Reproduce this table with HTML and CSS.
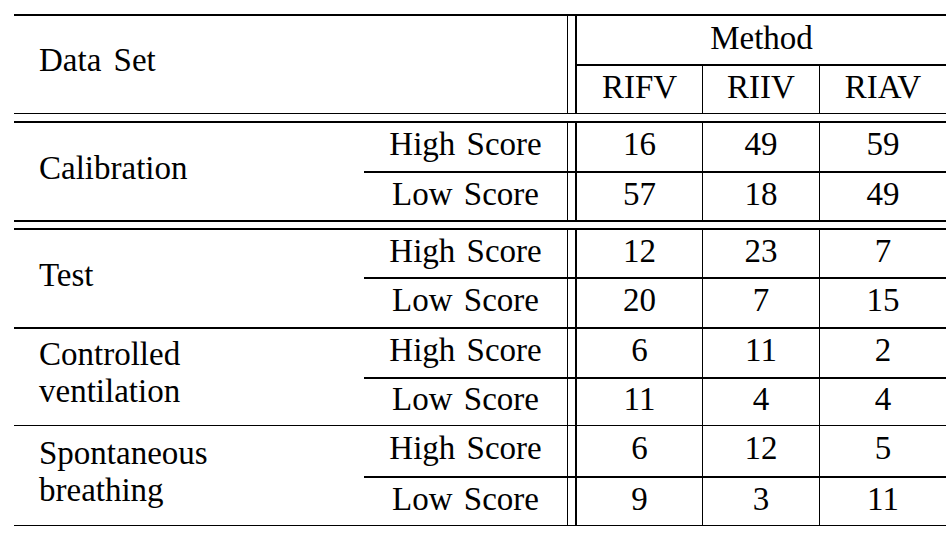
FILE: index.html
```html
<!DOCTYPE html>
<html lang="en">
<head>
<meta charset="utf-8">
<title>Data Set / Method table</title>
<link rel="stylesheet" href="styles.css">
</head>
<body>
<div class="table">
  <div class="cell head-label b1">Data Set</div>
  <div class="vrule head-vrule b1"></div>
  <div class="cell method b2">Method</div>
  <div class="cell num b1">RIFV</div>
  <div class="cell num sep b1">RIIV</div>
  <div class="cell num sep b1">RIAV</div>

  <div class="double"></div>

  <div class="cell label b2">Calibration</div>
  <div class="cell score b2">High Score</div>
  <div class="vrule b2"></div>
  <div class="cell num b2">16</div>
  <div class="cell num sep b2">49</div>
  <div class="cell num sep b2">59</div>
  <div class="cell score b2">Low Score</div>
  <div class="vrule b2"></div>
  <div class="cell num b2">57</div>
  <div class="cell num sep b2">18</div>
  <div class="cell num sep b2">49</div>

  <div class="double"></div>

  <div class="cell label b2">Test</div>
  <div class="cell score b2">High Score</div>
  <div class="vrule b2"></div>
  <div class="cell num b2">12</div>
  <div class="cell num sep b2">23</div>
  <div class="cell num sep b2">7</div>
  <div class="cell score b2">Low Score</div>
  <div class="vrule b2"></div>
  <div class="cell num b2">20</div>
  <div class="cell num sep b2">7</div>
  <div class="cell num sep b2">15</div>

  <div class="cell label wrap b1"><span class="label-text">Controlled ventilation</span></div>
  <div class="cell score b2">High Score</div>
  <div class="vrule b2"></div>
  <div class="cell num b2">6</div>
  <div class="cell num sep b2">11</div>
  <div class="cell num sep b2">2</div>
  <div class="cell score b1">Low Score</div>
  <div class="vrule b1"></div>
  <div class="cell num b1">11</div>
  <div class="cell num sep b1">4</div>
  <div class="cell num sep b1">4</div>

  <div class="cell label wrap wrap-low b1"><span class="label-text">Spontaneous breathing</span></div>
  <div class="cell score b2">High Score</div>
  <div class="vrule b2"></div>
  <div class="cell num b2">6</div>
  <div class="cell num sep b2">12</div>
  <div class="cell num sep b2">5</div>
  <div class="cell score b1">Low Score</div>
  <div class="vrule b1"></div>
  <div class="cell num b1">9</div>
  <div class="cell num sep b1">3</div>
  <div class="cell num sep b1">11</div>
</div>
</body>
</html>
```
FILE: styles.css
```css
* {
  box-sizing: border-box;
}

html, body {
  margin: 0;
  padding: 0;
  background: #fff;
}

body {
  font-family: "Liberation Serif", Tinos, "Times New Roman", Times, "DejaVu Serif", serif;
  font-size: 33px;
  color: #000;
}

.table {
  display: grid;
  width: 932px;
  margin: 14px 0 0 14px;
  border-top: 2px solid #000;
  grid-template-columns: 350px 203px 10px 125px 117px 127px;
  grid-template-rows: 50px 48px 9px 50px 49px 8px 49px 50px 50px 47px 52px 48px;
}

.cell {
  display: flex;
  align-items: center;
  justify-content: center;
  line-height: 37px;
  padding-bottom: 5px;
  white-space: nowrap;
  word-spacing: 3px;
}

.b1 { border-bottom: 1px solid #000; }
.b2 { border-bottom: 2px solid #000; }

.head-label {
  grid-column: 1 / 3;
  grid-row: 1 / 3;
  justify-content: flex-start;
  padding-left: 25px;
  padding-bottom: 8px;
  word-spacing: 4px;
}

.head-vrule {
  grid-column: 3;
  grid-row: 1 / 3;
}

.method {
  grid-column: 4 / 7;
  grid-row: 1;
  padding-bottom: 3px;
}

.vrule {
  border-left: 1px solid #000;
  border-right: 2px solid #000;
}

.sep {
  border-left: 1px solid #000;
}

.double {
  grid-column: 1 / -1;
  border-bottom: 2px solid #000;
}

.label {
  grid-column: 1;
  grid-row: span 2;
  justify-content: flex-start;
  padding-left: 25px;
  padding-bottom: 7px;
}

.label.wrap {
  white-space: normal;
  padding-bottom: 8px;
}

.label-text {
  max-width: 240px;
}

.label.wrap-low {
  padding-bottom: 8px;
}
```
